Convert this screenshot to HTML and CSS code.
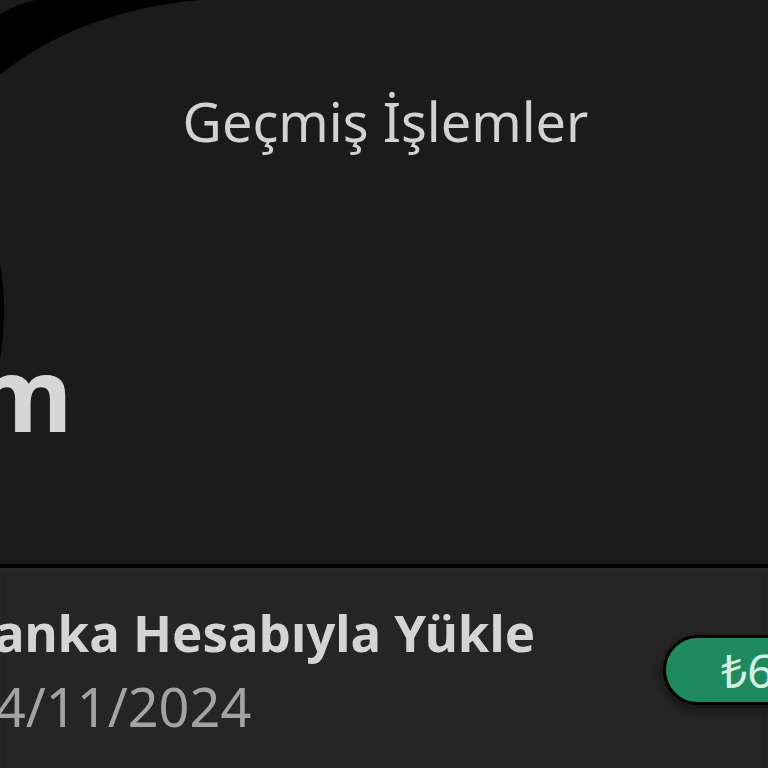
FILE: index.html
```html
<!DOCTYPE html>
<html lang="tr">
<head>
<meta charset="utf-8">
<link rel="stylesheet" href="styles.css">
</head>
<body>
<div class="screen">
  <svg class="deco" width="768" height="768" viewBox="0 0 768 768" aria-hidden="true">
    <path d="M36,0 L200,0 C140,5 60,25 0,75 L0,14 C10,8 22,3 36,0 Z" fill="#000"/>
    <path d="M0,262 Q8,310 0,358 Z" fill="#000"/>
  </svg>
  <section class="top">
    <h1 class="title">Geçmiş İşlemler</h1>
    <div class="balance">m</div>
  </section>
  <section class="card">
    <div class="tx">
      <div class="tx-name">Banka Hesabıyla Yükle</div>
      <div class="tx-date">04/11/2024</div>
    </div>
    <div class="amount">₺60,00</div>
  </section>
</div>
</body>
</html>
```

FILE: styles.css
```css
html, body {
  margin: 0;
  padding: 0;
  background: #1b1b1b;
}
body {
  font-family: "Noto Sans", "Open Sans", sans-serif;
  color: #d4d4d4;
}
.screen {
  position: relative;
  width: 768px;
  height: 768px;
  overflow: hidden;
  display: flex;
  flex-direction: column;
}
.deco {
  position: absolute;
  left: 0;
  top: 0;
  pointer-events: none;
}
.top {
  height: 564px;
  flex: none;
  display: flex;
  flex-direction: column;
}
.title {
  margin: 86px 0 0 0;
  text-align: center;
  font-weight: 400;
  font-size: 54px;
  line-height: 70px;
  color: #d2d2d2;
  padding-left: 3px;
}
.balance {
  margin: 186px 0 0 -27px;
  font-weight: 700;
  font-size: 102px;
  line-height: 102px;
  color: #d6d6d6;
}
.card {
  flex: 1;
  min-height: 0;
  background: #252525;
  border-top: 4px solid #000;
  display: flex;
  align-items: flex-start;
  box-shadow: inset 0 3px 4px rgba(60,60,60,0.25);
}
.tx {
  flex: 1;
  min-width: 0;
  margin-top: 34px;
  display: flex;
  flex-direction: column;
}
.tx-name {
  margin-left: -40px;
  font-weight: 700;
  font-size: 51px;
  line-height: 60px;
  color: #d4d4d4;
  white-space: nowrap;
}
.tx-date {
  margin: 14px 0 0 -36px;
  font-weight: 400;
  font-size: 54px;
  line-height: 60px;
  color: #a3a3a3;
  white-space: nowrap;
}
.amount {
  flex: none;
  box-sizing: border-box;
  width: 260px;
  height: 70px;
  margin: 67px -155px 0 0;
  padding: 0 0 0 55px;
  border: 3px solid #000;
  border-radius: 35px;
  background: #1e8b5f;
  color: #d9efe1;
  font-size: 46px;
  line-height: 64px;
  white-space: nowrap;
  box-shadow: 0 4px 12px rgba(0,0,0,0.55);
}
```
